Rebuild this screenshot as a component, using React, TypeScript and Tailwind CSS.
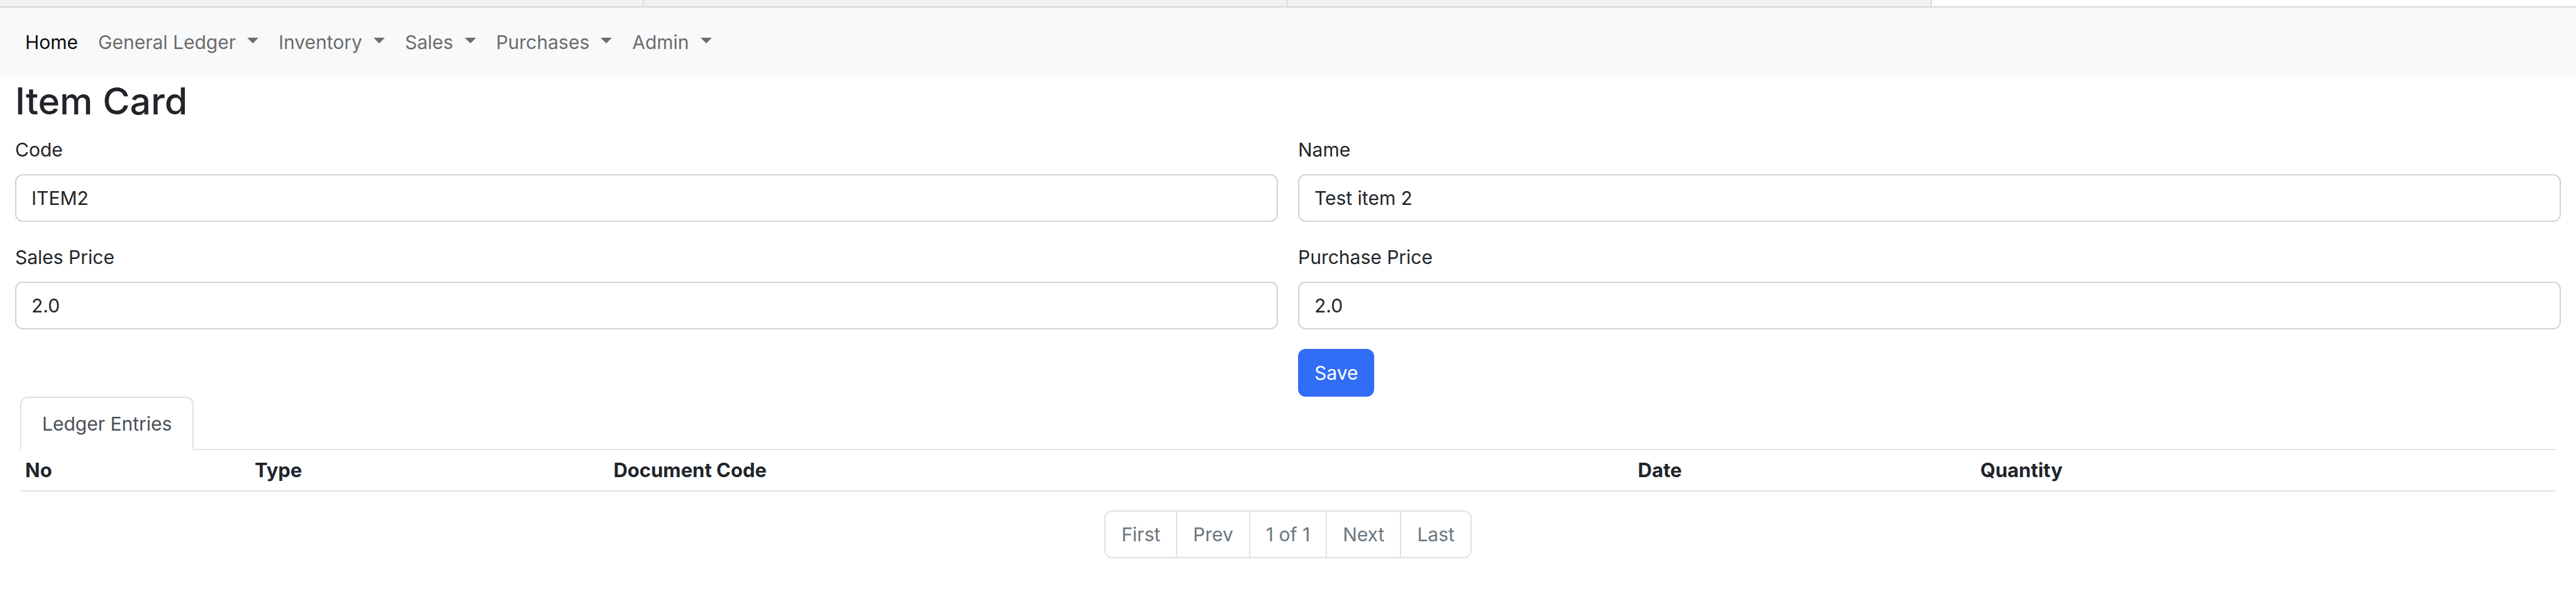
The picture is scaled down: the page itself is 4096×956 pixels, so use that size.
const menus = ["General Ledger", "Inventory", "Sales", "Purchases", "Admin"];

const pages = ["First", "Prev", "1 of 1", "Next", "Last"];

function Caret() {
  return (
    <svg className="mb-1 ml-[18px] h-[9px] w-[18px]" viewBox="0 0 18 9" aria-hidden="true">
      <path d="M0 0H18L9 9Z" fill="currentColor" />
    </svg>
  );
}

function Field({ id, label, value }: { id: string; label: string; value: string }) {
  return (
    <div className="flex flex-col gap-[14px]">
      <label htmlFor={id} className="self-start leading-[50px]">
        {label}
      </label>
      <input
        id={id}
        type="text"
        defaultValue={value}
        className="h-[76px] w-full rounded-xl border-2 border-[#ced4da] bg-white px-6 outline-none focus:border-[#86b7fe]"
      />
    </div>
  );
}

export default function App() {
  return (
    <div className="min-h-screen bg-white font-['Inter',sans-serif] text-[30px] leading-[48px] text-[#212529]">
      <div className="grid h-3 grid-cols-4 border-b-2 border-[#d6d6d6]">
        <div className="border-r-2 border-[#dedede] bg-[#f1f1f1]" />
        <div className="border-r-2 border-[#dedede] bg-[#f1f1f1]" />
        <div className="border-r-2 border-[#dedede] bg-[#f1f1f1]" />
        <div className="bg-white" />
      </div>
      <nav className="flex h-[109px] items-center gap-8 bg-[#f8f9fb] px-10">
        <a href="#home" className="text-[#0c0c0c]">
          Home
        </a>
        {menus.map((menu) => (
          <button key={menu} type="button" className="flex items-center text-[#6b6c6c]">
            {menu}
            <Caret />
          </button>
        ))}
      </nav>

      <main>
        <form className="px-6" onSubmit={(event) => event.preventDefault()}>
          <h1 className="mb-3 text-[59px] leading-[80px] font-medium">Item Card</h1>
          <div className="grid grid-cols-2 gap-x-8 gap-y-[31px]">
            <Field id="code" label="Code" value="ITEM2" />
            <Field id="name" label="Name" value="Test item 2" />
            <Field id="sales-price" label="Sales Price" value="2.0" />
            <Field id="purchase-price" label="Purchase Price" value="2.0" />
            <button
              type="submit"
              className="col-start-2 h-[76px] justify-self-start rounded-xl bg-[#316df6] px-[26px] text-white"
            >
              Save
            </button>
          </div>
        </form>

        <section className="px-8">
          <div role="tablist" className="flex border-b-2 border-[#dee2e6]">
            <button
              type="button"
              role="tab"
              aria-selected="true"
              className="-mb-0.5 h-[85px] rounded-t-xl border-2 border-[#dee2e6] border-b-white bg-white px-[33px] text-[#495057]"
            >
              Ledger Entries
            </button>
          </div>
          <table className="w-full table-fixed border-collapse text-left text-[31px]">
            <colgroup>
              <col className="w-[9.05%]" />
              <col className="w-[14.15%]" />
              <col className="w-[40.4%]" />
              <col className="w-[13.5%]" />
              <col className="w-[22.9%]" />
            </colgroup>
            <thead>
              <tr className="border-b-2 border-[#dee2e6]">
                <th className="p-2 font-bold">No</th>
                <th className="p-2 font-bold">Type</th>
                <th className="p-2 font-bold">Document Code</th>
                <th className="p-2 font-bold">Date</th>
                <th className="p-2 font-bold">Quantity</th>
              </tr>
            </thead>
          </table>
          <nav aria-label="Ledger entry pages" className="mt-[30px] flex justify-center">
            <ul className="flex h-[76px] divide-x-2 divide-[#dee2e6] rounded-xl border-2 border-[#dee2e6] text-[#6c757d]">
              {pages.map((page) => (
                <li key={page} className="flex">
                  <button type="button" className="px-[25px]">
                    {page}
                  </button>
                </li>
              ))}
            </ul>
          </nav>
        </section>
      </main>
    </div>
  );
}
